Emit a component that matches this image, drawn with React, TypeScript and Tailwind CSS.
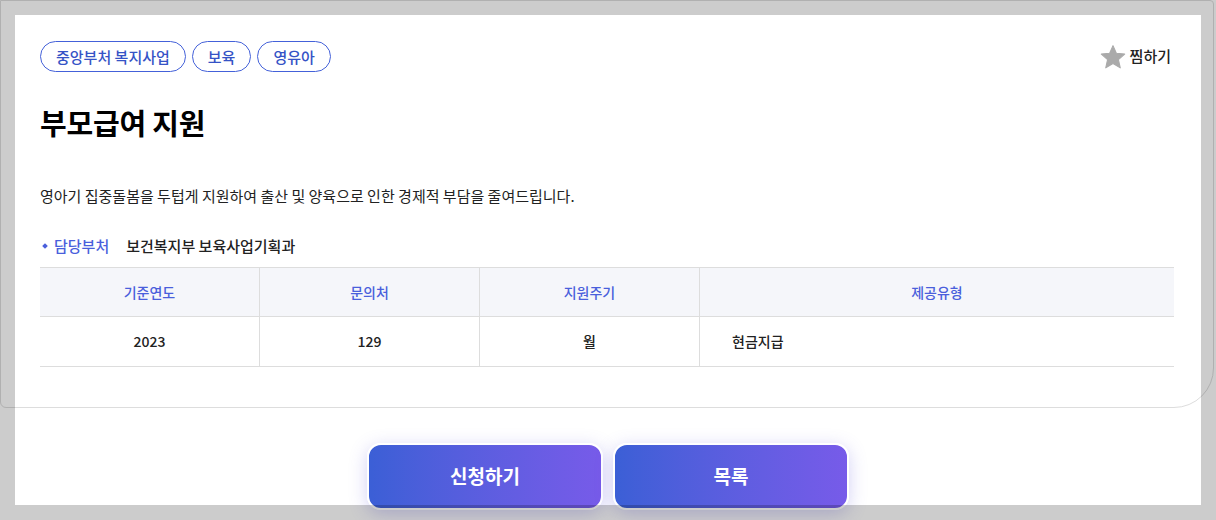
import { Fragment } from "react";

const TAGS = ["중앙부처 복지사업", "보육", "영유아"];

const COLUMNS = [
    { label: "기준연도", value: "2023", align: "center" },
    { label: "문의처", value: "129", align: "center" },
    { label: "지원주기", value: "월", align: "center" },
    { label: "제공유형", value: "현금지급", align: "left" },
];

function StarIcon() {
    return (
        <svg width="26" height="26" viewBox="0 0 24 24">
            <polygon
                points="12,1.5 15.1,8.6 22.8,9.3 17,14.4 18.7,22 12,18 5.3,22 7,14.4 1.2,9.3 8.9,8.6"
                fill="#aaaaaa"
                stroke="#aaaaaa"
                strokeWidth="1"
                strokeLinejoin="round"
            />
        </svg>
    );
}

export default function App() {
    return (
        <div className="relative w-[1216px] h-[520px] overflow-hidden bg-white font-['Noto_Sans_CJK_KR','Noto_Sans',sans-serif] text-[#222]">
            <div className="w-[1214px] h-[408px] border border-[#dddddd] rounded-tr-[4px] rounded-bl-[6px] rounded-br-[40px] px-[39px] pt-[40px]">
                <div className="flex items-center justify-between h-[31px]">
                    <div className="flex gap-[6px]">
                        {TAGS.map(tag => (
                            <span
                                key={tag}
                                className="flex items-center h-[31px] px-[15px] rounded-full border border-[#4461d9] text-[15px] font-medium text-[#3553c6] leading-none"
                            >
                                {tag}
                            </span>
                        ))}
                    </div>
                    <button className="flex items-center gap-[4px] mr-[3px] text-[15px] font-medium text-[#222]">
                        <StarIcon />
                        찜하기
                    </button>
                </div>

                <h1 className="mt-[30px] text-[29px] leading-[40px] font-bold tracking-[-0.2px] text-black">
                    부모급여 지원
                </h1>

                <p className="mt-[43px] text-[15px] leading-[22px] text-[#222]">
                    영아기 집중돌봄을 두텁게 지원하여 출산 및 양육으로 인한 경제적 부담을 줄여드립니다.
                </p>

                <div className="mt-[28px] flex items-center h-[22px] text-[15px]">
                    <span className="w-[4px] h-[4px] ml-[3px] mr-[7px] rotate-45 bg-[#4a5fdc]" />
                    <span className="font-medium text-[#4a5fdc]">담당부처</span>
                    <span className="ml-[17px] font-medium text-[#222]">보건복지부 보육사업기획과</span>
                </div>

                <div className="mt-[10px] grid grid-cols-[220px_220px_220px_1fr] border-t border-b border-[#dddddd] text-[14px]">
                    {COLUMNS.map((col, i) => (
                        <div
                            key={col.label}
                            className={`h-[49px] flex items-center justify-center bg-[#f5f6fa] border-b border-[#dddddd] font-medium text-[#4a5fdc] ${i < 3 ? "border-r" : ""}`}
                        >
                            {col.label}
                        </div>
                    ))}
                    {COLUMNS.map((col, i) => (
                        <Fragment key={col.value}>
                            <div
                                className={`h-[49px] flex items-center font-medium text-[#222] border-[#dddddd] ${i < 3 ? "border-r" : ""} ${col.align === "center" ? "justify-center" : "pl-[32px]"}`}
                            >
                                {col.value}
                            </div>
                        </Fragment>
                    ))}
                </div>
            </div>

            <div className="mt-[35px] flex justify-center gap-[10px]">
                {["신청하기", "목록"].map(label => (
                    <button
                        key={label}
                        className="w-[236px] h-[67px] rounded-[14px] border-2 border-white bg-linear-to-r from-[#3b5fd6] to-[#775be9] text-white text-[19px] font-bold shadow-[0_4px_18px_rgba(96,88,220,0.28)]"
                    >
                        {label}
                    </button>
                ))}
            </div>

            <div className="pointer-events-none absolute inset-0 border-[15px] border-black/20" />
        </div>
    );
}
